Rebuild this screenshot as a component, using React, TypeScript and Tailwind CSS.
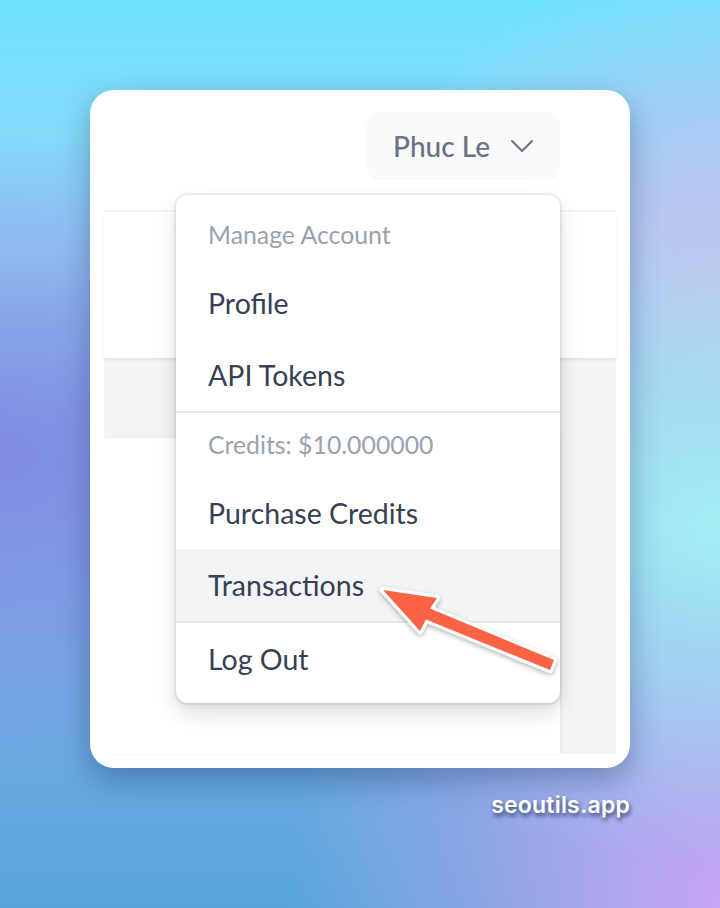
import React from "react";

function Chevron() {
  return (
    <svg viewBox="0 0 24 24" fill="none" stroke="currentColor" strokeWidth={1.5} className="ml-[16px] -mr-[4px] w-[32px] h-[32px]">
      <path strokeLinecap="round" strokeLinejoin="round" d="m19.5 8.25-7.5 7.5-7.5-7.5" />
    </svg>
  );
}

function Item({ label, active }: { label: string; active?: boolean }) {
  return (
    <div className={"block px-[32px] py-[16px] text-[28.5px] leading-[40px] text-gray-700 " + (active ? "bg-gray-100" : "")}>
      {label}
    </div>
  );
}

function Heading({ label }: { label: string }) {
  return <div className="block px-[32px] py-[16px] text-[24.8px] leading-[32px] text-gray-400">{label}</div>;
}

export default function App() {
  return (
    <div
      className="relative w-[720px] h-[908px] overflow-hidden font-['Lato',sans-serif] bg-[radial-gradient(ellipse_at_100%_58%,#a2eff5_0%,rgba(162,239,245,0)_45%),radial-gradient(ellipse_at_100%_100%,#c9a6f3_0%,rgba(201,166,243,0)_42%),radial-gradient(ellipse_at_100%_30%,#c4c0ee_0%,rgba(196,192,238,0)_35%),radial-gradient(ellipse_at_0%_50%,#7f8ce2_0%,rgba(127,140,226,0)_50%),linear-gradient(180deg,#6de3fc_0%,#98d2f7_28%,#86b0ea_55%,#58a5dc_100%)]"
    >
      <div className="pt-[90px] pl-[90px]">
        <div className="w-[540px] h-[678px] rounded-[24px] bg-white px-[14px] pb-[14px] flex flex-col shadow-[0_12px_30px_rgba(20,40,90,0.35)]">
          {/* nav */}
          <div className="h-[122px] border-b-2 border-gray-100 flex items-start justify-end pr-[56px] pt-[22px] relative z-20">
            <div className="relative flex">
              <button className="inline-flex items-center px-[24px] py-[16px] border-2 border-transparent text-[28px] leading-[32px] font-medium rounded-[12px] text-gray-500 bg-gray-50">
                Phuc Le
                <Chevron />
              </button>
              <div className="absolute right-0 top-full mt-[15px] w-[384px] rounded-[12px] bg-white py-[8px] shadow-[0_10px_25px_rgba(0,0,0,0.12),0_4px_8px_rgba(0,0,0,0.06)] ring-2 ring-black/5">
                <Heading label="Manage Account" />
                <Item label="Profile" />
                <Item label="API Tokens" />
                <div className="border-t-2 border-gray-200" />
                <Heading label="Credits: $10.000000" />
                <Item label="Purchase Credits" />
                <Item label="Transactions" active />
                <div className="border-t-2 border-gray-200" />
                <Item label="Log Out" />
              </div>
            </div>
          </div>
          {/* header */}
          <div className="h-[146px] bg-white shadow-[0_2px_3px_rgba(0,0,0,0.07)] relative z-10" />
          {/* main */}
          <div className="flex-1 bg-gray-100 pt-[80px] flex">
            <div className="w-[456px] bg-white shadow-[1px_0_3px_rgba(0,0,0,0.06)]" />
          </div>
        </div>
        <div className="w-[540px] flex justify-end mt-[20px]">
          <span className="text-white text-[23px] font-semibold font-['Inter',sans-serif] tracking-[0.2px] [text-shadow:1px_3px_4px_rgba(20,30,60,0.75)]">
            seoutils.app
          </span>
        </div>
      </div>
      <svg className="absolute left-0 top-0 w-[720px] h-[908px] pointer-events-none z-30" viewBox="0 0 720 908">
        <defs>
          <filter id="sh" x="-20%" y="-20%" width="140%" height="140%">
            <feDropShadow dx="0" dy="2" stdDeviation="2.5" floodColor="#000" floodOpacity="0.3" />
          </filter>
        </defs>
        <polygon
          points="383,590 437,598 430,608.5 554,660 550,670 426,619.5 420,631"
          fill="#fb6344"
          stroke="#fff"
          strokeWidth={6}
          strokeLinejoin="round"
          paintOrder="stroke"
          filter="url(#sh)"
        />
      </svg>
    </div>
  );
}
